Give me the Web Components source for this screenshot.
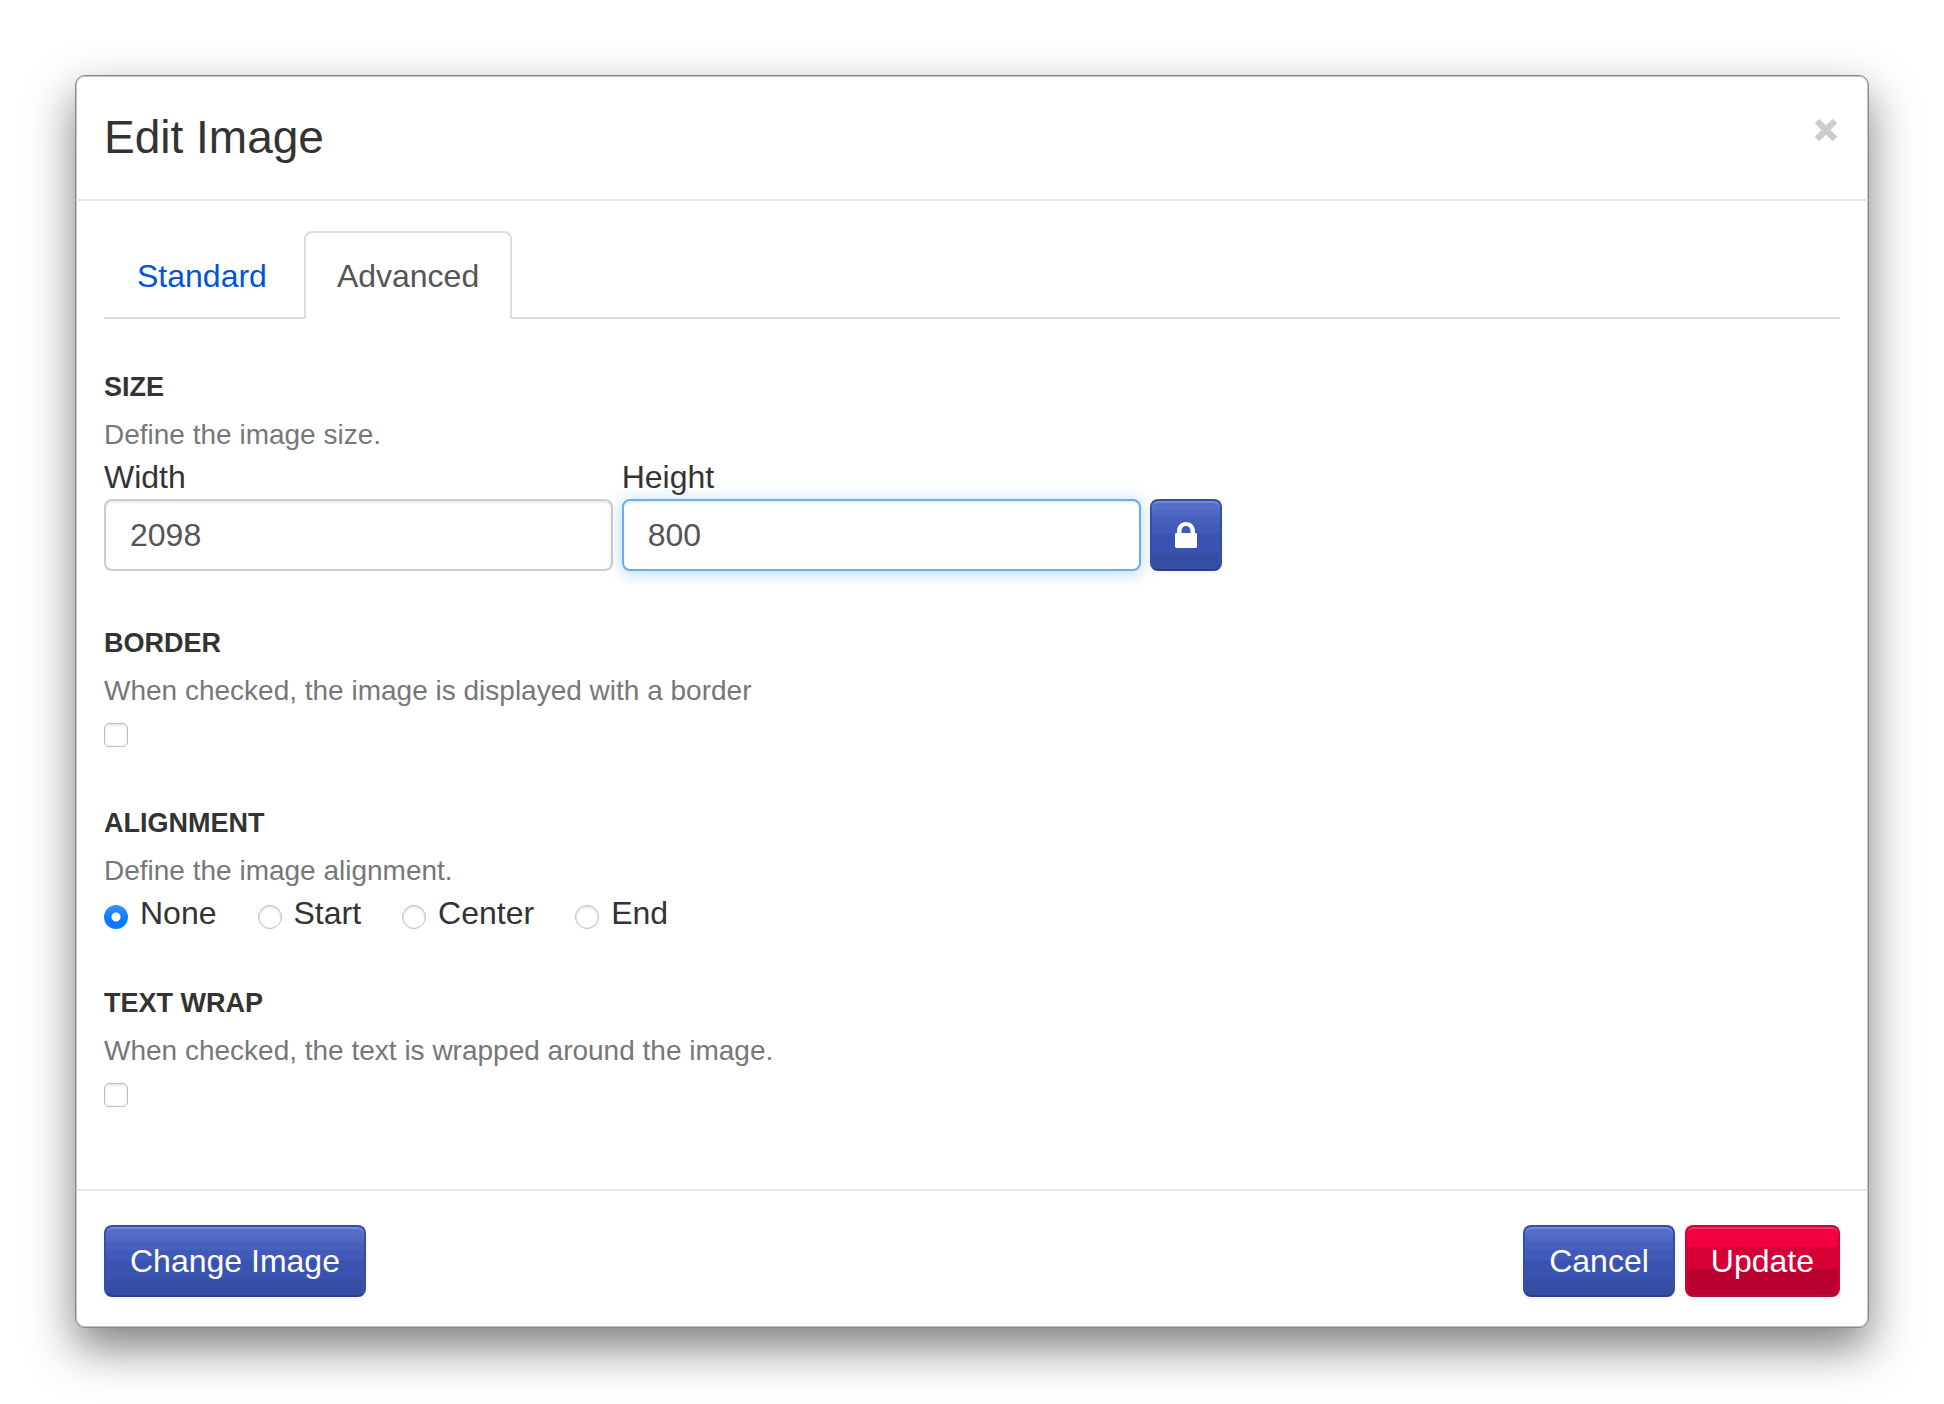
<!DOCTYPE html>
<html lang="en">
<head>
<meta charset="utf-8">
<title>Edit Image</title>
<style>
html, body { margin: 0; background: #fff; }
body { font: 32px/40px "Liberation Sans", Arial, sans-serif; color: #333; padding: 75px; box-sizing: border-box; }
</style>
</head>
<body>
<modal-dialog heading="Edit Image">
  <tab-bar slot="body"></tab-bar>
  <field-group slot="body" heading="SIZE" hint="Define the image size."><size-fields></size-fields></field-group>
  <field-group slot="body" heading="BORDER" hint="When checked, the image is displayed with a border"><check-box label="Border"></check-box></field-group>
  <field-group slot="body" heading="ALIGNMENT" hint="Define the image alignment."><align-options></align-options></field-group>
  <field-group slot="body" heading="TEXT WRAP" hint="When checked, the text is wrapped around the image."><check-box label="Text wrap"></check-box></field-group>
  <action-button slot="start">Change Image</action-button>
  <action-button slot="end">Cancel</action-button>
  <action-button slot="end" variant="danger">Update</action-button>
</modal-dialog>

<script>
class Base extends HTMLElement {
  connectedCallback() {
    if (this.shadowRoot) return;
    this.attachShadow({ mode: 'open' }).innerHTML = '<style>*{box-sizing:border-box}:host{display:block}</style>' + this.render();
  }
}

customElements.define('modal-dialog', class extends Base {
  render() {
    return `<style>
      section { border: 1px solid #888; border-radius: 10px; background: #fff; box-shadow: 0 20px 46px rgba(0,0,0,.5), inset 0 0 0 1px #c4c4c4; }
      header { display: flex; justify-content: space-between; align-items: flex-start; padding: 32px 28px 33px; border-bottom: 2px solid #e5e5e5; }
      h2 { margin: 0; font-size: 46px; line-height: 58px; font-weight: 400; }
      .close { border: 0; background: none; padding: 10px 2px; color: #ccc; display: flex; }
      .body { padding: 30px 28px 78px; display: flex; flex-direction: column; gap: 52px; }
      footer { display: flex; justify-content: space-between; padding: 34px 28px 30px; border-top: 2px solid #e5e5e5; }
      .end { display: flex; gap: 10px; }
    </style>
    <section role="dialog" aria-labelledby="t">
      <header><h2 id="t">${this.getAttribute('heading')}</h2>
        <button class="close" aria-label="Close"><svg width="24" height="24" viewBox="0 0 24 24"><path d="M3 3 21 21M21 3 3 21" fill="none" stroke="currentColor" stroke-width="6.4"/></svg></button></header>
      <div class="body"><slot name="body"></slot></div>
      <footer><slot name="start"></slot><div class="end"><slot name="end"></slot></div></footer>
    </section>`;
  }
});

customElements.define('tab-bar', class extends Base {
  render() {
    return `<style>
      :host { margin-bottom: -4px; }
      nav { display: flex; gap: 4px; border-bottom: 2px solid #ddd; }
      a { padding: 22px 31px; border: 2px solid transparent; border-bottom: 0; border-radius: 8px 8px 0 0; color: #0055d4; text-decoration: none; margin-bottom: -2px; line-height: 42px; }
      a[aria-current] { color: #555; border-color: #ddd; background: #fff; }
    </style><nav><a href="#standard">Standard</a><a href="#advanced" aria-current="page">Advanced</a></nav>`;
  }
});

customElements.define('field-group', class extends Base {
  render() {
    return `<style>
      h3 { margin: 0; font-size: 27px; line-height: 40px; font-weight: 700; }
      p { margin: 0; padding: 10px 0 4px; font-size: 28px; line-height: 36px; color: #777; }
    </style><section><h3>${this.getAttribute('heading')}</h3><p>${this.getAttribute('hint')}</p><slot></slot></section>`;
  }
});

customElements.define('size-fields', class extends Base {
  render() {
    return `<style>
      .row { display: flex; align-items: flex-end; gap: 9px; }
      .f { display: flex; flex-direction: column; gap: 2px; width: 29.3%; }
      .f + .f { width: 29.9%; }
      label { line-height: 40px; }
      input { font: inherit; color: #555; width: 100%; height: 72px; padding: 0 24px; border: 2px solid #ccc; border-radius: 8px; outline: 0; background: #fff; box-shadow: inset 0 2px 2px rgba(0,0,0,.075); }
      .on input { border-color: #66afe9; box-shadow: inset 0 2px 2px rgba(0,0,0,.075), 0 2px 16px rgba(102,175,233,.5); }
    </style><div class="row">
      <div class="f"><label for="w">Width</label><input id="w" value="2098"></div>
      <div class="f on"><label for="h">Height</label><input id="h" value="800"></div>
      <action-button icon label="Lock proportions"><svg width="22" height="26" viewBox="0 0 22 26" style="display:block"><path fill="#fff" fill-rule="evenodd" d="M1 11h1V8.500C2.500 3.500 6 0 11 0s8.500 3.500 9 8.500V11h1l1 1v13l-1 1H1l-1-1V12ZM6.500 11h9V8.500C15.500 6 13.500 4 11 4S6.500 6 6.500 8.500Z"/></svg></action-button></div>`;
  }
});

customElements.define('check-box', class extends Base {
  render() {
    return `<style>
      :host { padding: 10px 0 4px; }
      input { display: block; appearance: none; width: 24px; height: 24px; margin: 0; border: 1px solid #bdbdbd; border-radius: 5px; background: #fff; box-shadow: inset 0 1px 3px rgba(0,0,0,.15); }
    </style><input type="checkbox" aria-label="${this.getAttribute('label')}">`;
  }
});

customElements.define('align-options', class extends Base {
  render() {
    return `<style>
      .row { display: flex; gap: 41px; height: 38px; }
      label { display: flex; gap: 12px; line-height: 40px; }
      input { appearance: none; width: 24px; height: 24px; margin: 12px 0 0; border: 1px solid #bdbdbd; border-radius: 50%; background: #fff; box-shadow: inset 0 1px 3px rgba(0,0,0,.15); }
      input:checked { border: 0; background: radial-gradient(circle, #fff 4px, transparent 5px), linear-gradient(#3394ff, #0a7aff 60%); box-shadow: none; }
    </style><div class="row" role="radiogroup" aria-label="Alignment">${['None', 'Start', 'Center', 'End'].map((t, i) =>
      `<label><input type="radio" name="a"${i ? '' : ' checked'}>${t}</label>`).join('')}</div>`;
  }
});

customElements.define('action-button', class extends Base {
  render() {
    const icon = this.hasAttribute('icon');
    const danger = this.getAttribute('variant') === 'danger';
    return `<style>
      :host { flex: none; }
      button { display: flex; align-items: center; justify-content: center; font: inherit; color: #fff; height: 72px; min-width: 72px; padding: 0 ${icon ? 0 : 24}px; border: 2px solid ${danger ? '#d40036' : '#354fa6'}; border-bottom-color: ${danger ? '#a6153c' : '#2a3f85'}; border-radius: 8px;
        background: ${danger ? 'linear-gradient(#f20040 0 20px, #d40036 20px 42px, #ba002f 42px)' : 'linear-gradient(#546dc9 0 9px, #4e67c1 9px 15px, #4760bb 15px 23px, #415aba 23px 33px, #3a53b0 33px 52px, #354da3 52px)'};
        box-shadow: inset 0 2px 0 rgba(255,255,255,.2), 0 2px 4px rgba(0,0,0,.05); }
    </style><button type="button"${icon ? ` aria-label="${this.getAttribute('label')}"` : ''}><slot></slot></button>`;
  }
});
</script>
</body>
</html>
